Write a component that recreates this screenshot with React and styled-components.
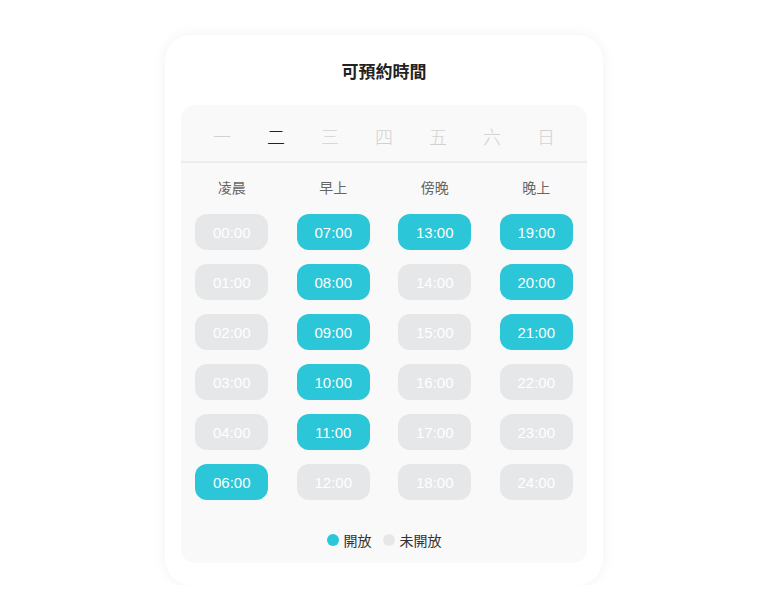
import React from "react";
import styled, { createGlobalStyle } from "styled-components";

const GlobalStyle = createGlobalStyle`
  body {
    margin: 0;
    background: #ffffff;
    font-family: "Noto Sans CJK TC", "Noto Sans", "Liberation Sans", sans-serif;
  }
`;

const Page = styled.div`
  display: flex;
  justify-content: center;
  padding-top: 35px;
`;

const Card = styled.div`
  width: 438px;
  box-sizing: border-box;
  padding: 0 16px 22px;
  background: #ffffff;
  border-radius: 26px;
  box-shadow: 0 0 14px rgba(0, 0, 0, 0.06);
`;

const Title = styled.h2`
  margin: 0;
  height: 70px;
  display: flex;
  align-items: center;
  justify-content: center;
  font-size: 17px;
  font-weight: 700;
  color: #222;
`;

const Panel = styled.div`
  background: #f9f9f9;
  border-radius: 14px;
`;

const Days = styled.div`
  display: grid;
  grid-template-columns: repeat(7, 1fr);
  box-sizing: border-box;
  padding: 6px 14px 0;
  height: 58px;
  align-items: center;
  border-bottom: 2px solid #ececec;
`;

const Day = styled.div`
  text-align: center;
  font-size: 18px;
  font-weight: 300;
  color: ${(p) => (p.active ? "#222" : "#d2d2d2")};
`;

const Grid = styled.div`
  display: grid;
  grid-template-columns: repeat(4, 1fr);
  justify-items: center;
  row-gap: 14px;
  padding-top: 13px;
`;

const Header = styled.div`
  font-size: 14px;
  color: #666;
  height: 22px;
  line-height: 22px;
  margin-bottom: 2px;
`;

const Slot = styled.div`
  width: 73px;
  height: 36px;
  border-radius: 12px;
  display: flex;
  align-items: center;
  justify-content: center;
  font-family: "Liberation Sans", "Noto Sans CJK TC", sans-serif;
  font-size: 15px;
  color: #ffffff;
  background: ${(p) => (p.open ? "#2bc6d7" : "#e6e7e9")};
`;

const Legend = styled.div`
  display: flex;
  justify-content: center;
  align-items: center;
  gap: 11px;
  height: 46px;
  margin-top: 17px;
  font-size: 14px;
  color: #333;
`;

const LegendItem = styled.div`
  display: flex;
  align-items: center;
  gap: 5px;
`;

const Dot = styled.span`
  width: 12px;
  height: 12px;
  border-radius: 50%;
  background: ${(p) => (p.open ? "#2bc6d7" : "#e6e7e9")};
`;

const days = ["一", "二", "三", "四", "五", "六", "日"];
const headers = ["凌晨", "早上", "傍晚", "晚上"];
const columns = [
  ["00:00", "01:00", "02:00", "03:00", "04:00", "06:00"],
  ["07:00", "08:00", "09:00", "10:00", "11:00", "12:00"],
  ["13:00", "14:00", "15:00", "16:00", "17:00", "18:00"],
  ["19:00", "20:00", "21:00", "22:00", "23:00", "24:00"],
];
const openSlots = ["06:00", "07:00", "08:00", "09:00", "10:00", "11:00", "13:00", "19:00", "20:00", "21:00"];

export default function App() {
  const rows = [0, 1, 2, 3, 4, 5];
  return (
    <Page>
      <GlobalStyle />
      <Card>
        <Title>可預約時間</Title>
        <Panel>
          <Days>
            {days.map((d, i) => (
              <Day key={d} active={i === 1}>
                {d}
              </Day>
            ))}
          </Days>
          <Grid>
            {headers.map((h) => (
              <Header key={h}>{h}</Header>
            ))}
            {rows.map((r) =>
              columns.map((col) => (
                <Slot key={col[r]} open={openSlots.includes(col[r])}>
                  {col[r]}
                </Slot>
              ))
            )}
          </Grid>
          <Legend>
            <LegendItem>
              <Dot open />
              開放
            </LegendItem>
            <LegendItem>
              <Dot />
              未開放
            </LegendItem>
          </Legend>
        </Panel>
      </Card>
    </Page>
  );
}
